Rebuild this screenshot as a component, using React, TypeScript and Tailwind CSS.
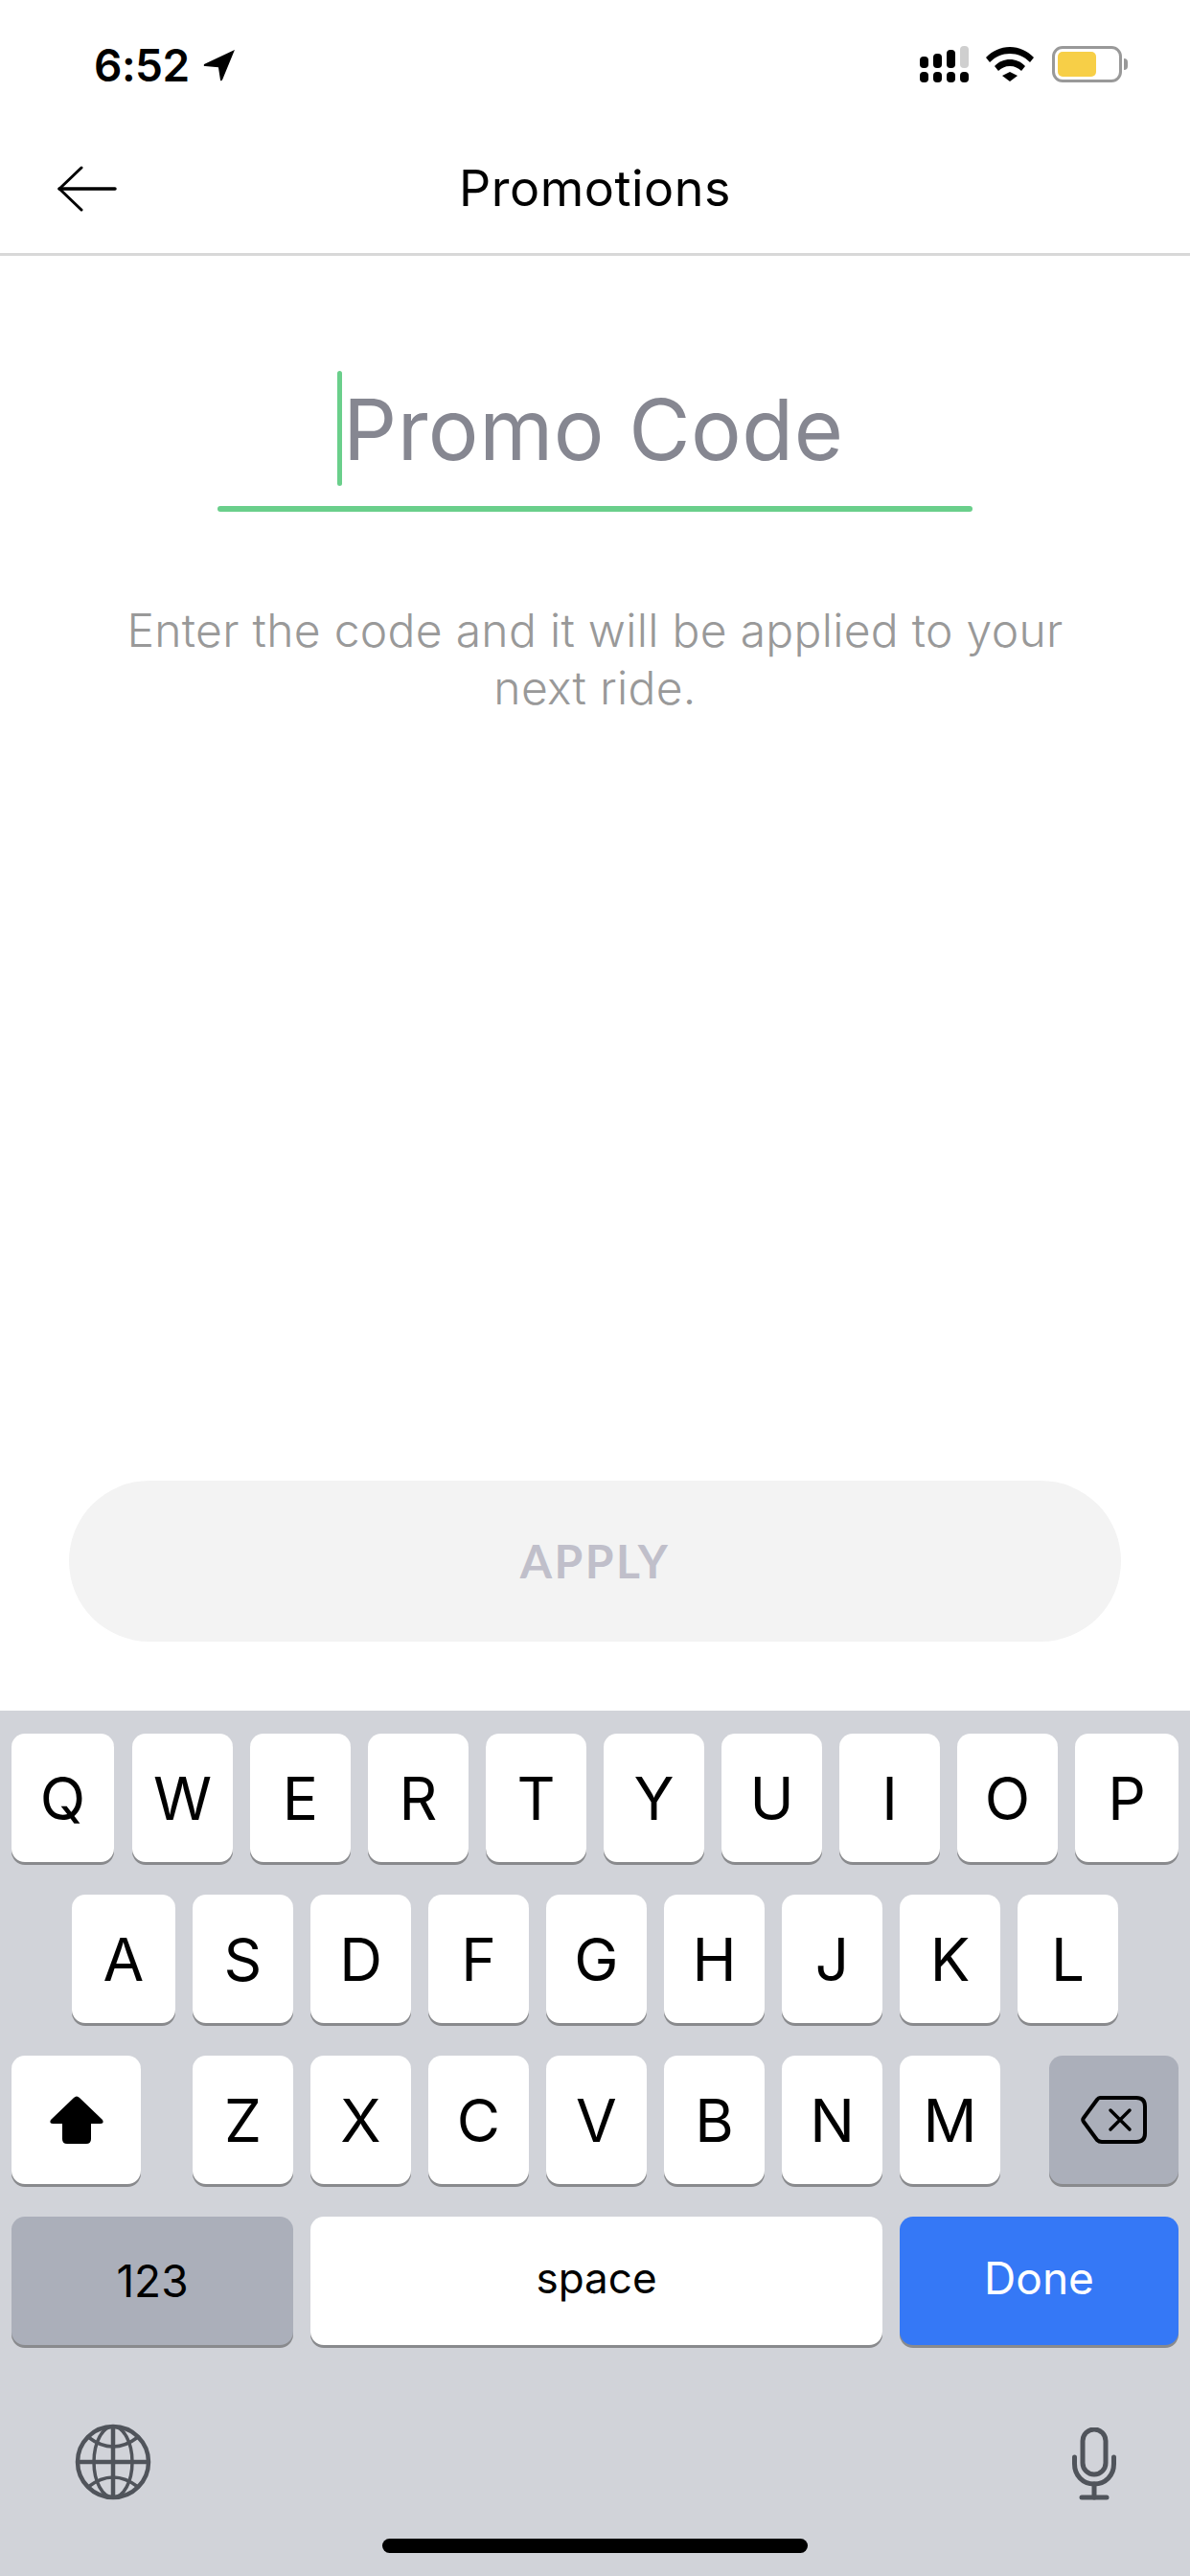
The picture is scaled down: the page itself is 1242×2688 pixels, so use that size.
import React from "react";

const rowOne = ["Q", "W", "E", "R", "T", "Y", "U", "I", "O", "P"];
const rowTwo = ["A", "S", "D", "F", "G", "H", "J", "K", "L"];
const rowThree = ["Z", "X", "C", "V", "B", "N", "M"];

const keyBase =
  "flex h-[134px] items-center justify-center rounded-[14px] shadow-[0_3px_0_#898a8d] text-black";

const LetterKey = ({ label, width = "w-[105px]" }: { label: string; width?: string }) => (
  <div className={`${keyBase} ${width} bg-white font-['Inter',sans-serif] text-[62px] font-normal`}>
    {label}
  </div>
);

const StatusBar = () => (
  <div className="flex h-[96px] shrink-0 items-end justify-between pl-[98px] pr-[65px]">
    <div className="flex items-center gap-[14px]">
      <span className="font-['Inter',sans-serif] text-[46px] font-semibold leading-[56px] tracking-[-0.5px] text-black">
        6:52
      </span>
      <svg width="34" height="34" viewBox="0 0 32 32">
        <path d="M31 1 L1 15 Q0 17 2 17 L15 18 L17 31 Q18 32 19 30 Z" fill="#000" />
      </svg>
    </div>
    <div className="flex items-center pb-[10px]">
      <svg className="mr-[18px]" width="51" height="38" viewBox="0 0 51 38">
        <rect x="0" y="11" width="9" height="12" rx="4" fill="#000" />
        <rect x="14" y="8" width="9" height="15" rx="4" fill="#000" />
        <rect x="28" y="4" width="9" height="19" rx="4" fill="#000" />
        <rect x="42" y="0" width="9" height="23" rx="4" fill="#cfcfcf" />
        <rect x="0" y="27" width="9" height="11" rx="4" fill="#000" />
        <rect x="14" y="27" width="9" height="11" rx="4" fill="#000" />
        <rect x="28" y="27" width="9" height="11" rx="4" fill="#000" />
        <rect x="42" y="27" width="9" height="11" rx="4" fill="#000" />
      </svg>
      <svg className="mr-[19px]" width="50" height="36" viewBox="0 0 50 36">
        <path d="M25 0 C15 0 7 4 0 11 L4 16 C10 10 17 7 25 7 C33 7 40 10 46 16 L50 11 C43 4 35 0 25 0 Z" fill="#000" />
        <path d="M25 13 C19 13 14 15 9 20 L13 25 C16 22 20 20 25 20 C30 20 34 22 37 25 L41 20 C36 15 31 13 25 13 Z" fill="#000" />
        <path d="M25 26 L17 30 L25 36 L33 30 Z" fill="#000" />
      </svg>
      <div className="flex items-center">
        <div className="flex h-[38px] w-[73px] items-center rounded-[11px] border-[3px] border-[#999999] p-[3px]">
          <div className="h-full w-[40px] rounded-[5px] bg-[#f7cf47]" />
        </div>
        <div className="ml-[2px] h-[12px] w-[4px] rounded-r-full bg-[#999999]" />
      </div>
    </div>
  </div>
);

const NavBar = () => (
  <div className="relative flex h-[171px] shrink-0 items-center justify-center border-b-[3px] border-[#d8d8d8] pt-[34px]">
    <svg className="absolute left-[60px] top-[77px]" width="62" height="48" viewBox="0 0 62 48" fill="none">
      <path d="M25 2 L2 24 L25 46" stroke="#000" strokeWidth="3" strokeLinecap="round" strokeLinejoin="round" />
      <path d="M2 24 H60" stroke="#000" strokeWidth="3.5" strokeLinecap="round" />
    </svg>
    <span className="font-['Inter',sans-serif] text-[52px] font-normal leading-[62px] tracking-[0.5px] text-black">
      Promotions
    </span>
  </div>
);

const PromoInput = () => (
  <div className="mx-auto mt-[120px] flex w-[788px] flex-col items-center">
    <div className="flex h-[120px] w-full items-center pl-[125px]">
      <div className="h-[120px] w-[5px] rounded-full bg-[#6acf8b]" />
      <span className="ml-[1px] pt-[2px] font-['Inter',sans-serif] text-[88px] font-normal leading-[120px] tracking-[0.5px] text-[#868791]">
        Promo Code
      </span>
    </div>
    <div className="mt-[21px] h-[6px] w-full rounded-full bg-[#6acf8b]" />
  </div>
);

const Keyboard = () => (
  <div className="flex h-[903px] shrink-0 flex-col bg-[#d1d3d9] px-[12px] pt-[24px]">
    <div className="flex gap-[18px]">
      {rowOne.map((k, i) => (
        <LetterKey
          key={k}
          label={k}
          width={i === 0 ? "w-[107px] mr-[1px]" : i === 9 ? "w-[108px]" : "w-[105px]"}
        />
      ))}
    </div>
    <div className="mt-[34px] flex gap-[18px] pl-[63px]">
      {rowTwo.map((k, i) => (
        <LetterKey key={k} label={k} width={i === 0 ? "w-[108px]" : "w-[105px]"} />
      ))}
    </div>
    <div className="mt-[34px] flex gap-[18px]">
      <div className={`${keyBase} mr-[36px] w-[135px] bg-white`}>
        <svg width="58" height="50" viewBox="0 0 58 50">
          <path
            d="M26 2 Q29 -1 32 2 L56 25 Q58 29 54 29 H44 V45 Q44 50 39 50 H19 Q14 50 14 45 V29 H4 Q0 29 2 25 Z"
            fill="#000"
          />
        </svg>
      </div>
      {rowThree.map((k) => (
        <LetterKey key={k} label={k} />
      ))}
      <div className={`${keyBase} ml-[33px] w-[135px] bg-[#abafba]`}>
        <svg width="70" height="52" viewBox="0 0 70 52" fill="none">
          <path
            d="M20 3 H58 Q67 3 67 12 V40 Q67 49 58 49 H22 Q19 49 17 47 L3 28 Q1.5 26 3 24 L17 5 Q18.5 3 20 3 Z"
            stroke="#000"
            strokeWidth="4"
            strokeLinejoin="round"
          />
          <path d="M31 16 L51 36 M51 16 L31 36" stroke="#000" strokeWidth="3.5" strokeLinecap="round" />
        </svg>
      </div>
    </div>
    <div className="mt-[34px] flex gap-[18px]">
      <div className={`${keyBase} w-[294px] bg-[#abafba] font-['Inter',sans-serif] text-[46px]`}>123</div>
      <div className={`${keyBase} w-[597px] bg-white pb-[6px] font-['Inter',sans-serif] text-[44px]`}>space</div>
      <div className={`${keyBase} w-[291px] bg-[#3578f6] pb-[6px] font-['Inter',sans-serif] text-[46px] !text-white shadow-[0_3px_0_#6b6c70]`}>
        Done
      </div>
    </div>
    <div className="mt-[82px] flex items-start justify-between pl-[66px] pr-[66px]">
      <svg width="80" height="80" viewBox="0 0 80 80" fill="none" stroke="#50545b" strokeWidth="3.5">
        <ellipse cx="40" cy="40" rx="37" ry="37" strokeWidth="4.5" />
        <ellipse cx="40" cy="40" rx="20" ry="37" />
        <path d="M40 3 V77" strokeWidth="4.5" />
        <path d="M3 40 H77" strokeWidth="4.5" />
        <path d="M14 14 Q40 34 66 14" />
        <path d="M14 66 Q40 46 66 66" />
      </svg>
      <svg className="mt-[4px] mr-[-1px]" width="46" height="76" viewBox="0 0 46 76" fill="none" stroke="#50545b" strokeWidth="5" strokeLinecap="round">
        <rect x="11" y="2" width="24" height="47" rx="12" />
        <path d="M2.5 31 V38 C2.5 50 11 59 23 59 C35 59 43.5 50 43.5 38 V31" />
        <path d="M23 59 V73" />
        <path d="M10 73 H36" />
      </svg>
    </div>
    <div className="mx-auto mt-[40px] h-[15px] w-[444px] rounded-full bg-black" />
  </div>
);

export default function App() {
  return (
    <div className="flex h-[2688px] w-[1242px] flex-col overflow-hidden bg-white">
      <StatusBar />
      <NavBar />
      <div className="flex flex-1 flex-col">
        <PromoInput />
        <p className="mx-auto mt-[94px] w-[1040px] text-center font-['Inter',sans-serif] text-[48px] font-light leading-[60px] tracking-[0.3px] text-[#999999]">
          Enter the code and it will be applied to your
          <br />
          next ride.
        </p>
        <div className="mx-[72px] mt-auto mb-[72px] flex h-[168px] items-center justify-center rounded-full bg-[#f3f3f3]">
          <span className="font-['Lato',sans-serif] text-[48px] font-bold tracking-[2.5px] text-[#c0bfca]">APPLY</span>
        </div>
      </div>
      <Keyboard />
    </div>
  );
}
